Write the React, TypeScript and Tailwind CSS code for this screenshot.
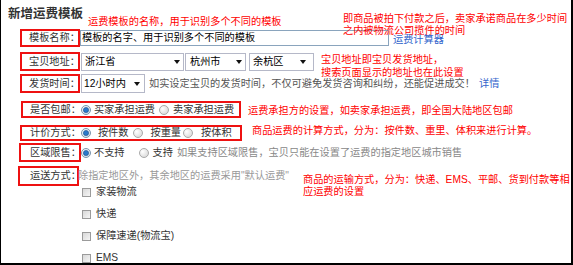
import React from 'react';

const Radio = ({ checked = false }: { checked?: boolean }) => (
  <svg width="10" height="10" viewBox="0 0 10 10" className="shrink-0">
    <defs>
      <radialGradient id={checked ? 'rOn' : 'rOff'} cx="0.35" cy="0.35" r="0.8">
        <stop offset="0" stopColor="#ffffff" />
        <stop offset="1" stopColor={checked ? '#c9d6e2' : '#d4d4d4'} />
      </radialGradient>
    </defs>
    <circle cx="5" cy="5" r="4.5" fill={`url(#${checked ? 'rOn' : 'rOff'})`} stroke={checked ? '#7a95ad' : '#a9a9a9'} />
    {checked && <circle cx="5" cy="5" r="2.6" fill="#2b78c9" stroke="#1a4f8a" strokeWidth="0.6" />}
  </svg>
);

const Check = () => (
  <span className="block h-[9px] w-[9px] shrink-0 border border-[#9b9b9b] bg-gradient-to-br from-[#d8d8d8] to-[#f6f6f6]" />
);

const Arrow = () => (
  <svg width="6" height="4" viewBox="0 0 6 4" className="shrink-0">
    <path d="M0 0h6L3 4z" fill="#111" />
  </svg>
);

const Label = ({ children }: { children: React.ReactNode }) => (
  <span className="whitespace-nowrap text-[#333]">{children}</span>
);

const RedText = ({ children, className }: { children: React.ReactNode; className: string }) => (
  <div className={`absolute whitespace-nowrap text-[10.2px] text-[#ff0000] ${className}`}>{children}</div>
);

export default function App() {
  return (
    <div className="relative h-[265px] w-[573px] overflow-hidden border-b-2 border-l border-r-2 border-black bg-white font-['Liberation_Sans','Noto_Sans_CJK_SC',sans-serif] text-[10.2px] leading-[12px]">
      <div className="ml-[7px] mt-[6px] h-[16px] text-[12.5px] font-bold leading-[16px] text-[#333]">新增运费模板</div>

      {/* 模板名称 */}
      <div className="mt-[7px] flex h-[18px] items-center">
        <div className="ml-[19px] flex h-[18px] w-[60px] items-center border-2 border-[#ee1111] pl-[7px]">
          <Label>模板名称：</Label>
        </div>
        <div className="flex h-[16px] w-[309px] items-center border border-[#8aa4bd] pl-[1px] text-black">
          模板的名字、用于识别多个不同的模板
        </div>
        <span className="ml-[4px] mt-[3px] text-[#3366cc]">运费计算器</span>
      </div>

      {/* 宝贝地址 */}
      <div className="mt-[5px] flex h-[19px] items-center">
        <div className="ml-[19px] flex h-[19px] w-[60px] items-center border-2 border-[#ee1111] pl-[7px]">
          <Label>宝贝地址：</Label>
        </div>
        <div className="ml-[1px] flex h-[18px] w-[103px] items-center justify-between border border-[#b5b8c8] pl-[3px] pr-[3px] text-black">
          <span>浙江省</span>
          <Arrow />
        </div>
        <div className="ml-[1px] flex h-[18px] w-[61px] items-center justify-between border border-[#b5b8c8] pl-[4px] pr-[3px] text-black">
          <span>杭州市</span>
          <Arrow />
        </div>
        <div className="ml-[3px] flex h-[18px] w-[65px] items-center justify-between border border-[#b5b8c8] pl-[3px] pr-[7px] text-black">
          <span>余杭区</span>
          <Arrow />
        </div>
      </div>

      {/* 发货时间 */}
      <div className="mt-[3px] flex h-[19px] items-center">
        <div className="ml-[19px] flex h-[19px] w-[60px] items-center border-2 border-[#ee1111] pl-[7px]">
          <Label>发货时间：</Label>
        </div>
        <div className="ml-[1px] flex h-[19px] w-[64px] items-center justify-between border border-[#b5b8c8] pl-[2px] pr-[4px] text-black">
          <span>12小时内</span>
          <Arrow />
        </div>
        <span className="ml-[4px] whitespace-nowrap text-[#555]">如实设定宝贝的发货时间，不仅可避免发货咨询和纠纷，还能促进成交！</span>
        <span className="ml-[4px] text-[#3366cc]">详情</span>
      </div>

      {/* 是否包邮 */}
      <div className="ml-[20px] mt-[8px] flex h-[17px] w-[220px] items-center border-2 border-[#ee1111] pl-[7px]">
        <Label>是否包邮：</Label>
        <Radio checked />
        <span className="ml-[3px] text-[#333]">买家承担运费</span>
        <span className="ml-[4px]">
          <Radio />
        </span>
        <span className="ml-[4px] text-[#333]">卖家承担运费</span>
      </div>

      {/* 计价方式 */}
      <div className="ml-[19px] mt-[7px] flex h-[16px] w-[222px] items-center border-2 border-[#ee1111] pl-[8px]">
        <Label>计价方式：</Label>
        <Radio checked />
        <span className="ml-[7px] text-[#333]">按件数</span>
        <span className="ml-[4px]">
          <Radio />
        </span>
        <span className="ml-[8px] text-[#333]">按重量</span>
        <span className="ml-[2px]">
          <Radio />
        </span>
        <span className="ml-[8px] text-[#333]">按体积</span>
      </div>

      {/* 区域限售 */}
      <div className="mt-[2px] flex h-[19px] items-center">
        <div className="ml-[18px] flex h-[19px] w-[62px] items-center border-2 border-[#ee1111] pl-[9px]">
          <Label>区域限售：</Label>
        </div>
        <Radio checked />
        <span className="ml-[3px] text-[#333]">不支持</span>
        <span className="ml-[14px]">
          <Radio />
        </span>
        <span className="ml-[4px] text-[#333]">支持</span>
        <span className="ml-[4px] whitespace-nowrap text-[#888]">如果支持区域限售，宝贝只能在设置了运费的指定地区城市销售</span>
      </div>

      {/* 运送方式 */}
      <div className="mt-[4px] flex h-[20px] items-center">
        <div className="ml-[17px] flex h-[20px] w-[61px] items-center border-2 border-[#ee1111] pl-[10px]">
          <Label>运送方式：</Label>
        </div>
        <span className="ml-[-1px] whitespace-nowrap text-[#999]">除指定地区外，其余地区的运费采用"默认运费"</span>
      </div>
      <div className="ml-[81px] flex flex-col gap-[10px]">
        {['家装物流', '快递', '保障速递(物流宝)', 'EMS'].map((name) => (
          <div key={name} className="flex h-[12px] items-center">
            <Check />
            <span className="ml-[5px] text-[#333]">{name}</span>
          </div>
        ))}
      </div>

      {/* annotations */}
      <RedText className="left-[87px] top-[16px]">运费模板的名称，用于识别多个不同的模板</RedText>
      <RedText className="left-[342px] top-[13px]">
        即商品被拍下付款之后，卖家承诺商品在多少时间
        <br />
        之内被物流公司揽件的时间
      </RedText>
      <RedText className="left-[320px] top-[53px] leading-[13px]">
        宝贝地址即宝贝发货地址，
        <br />
        搜索页面显示的地址也在此设置
      </RedText>
      <RedText className="left-[247px] top-[105px]">运费承担方的设置，如卖家承担运费，即全国大陆地区包邮</RedText>
      <RedText className="left-[251px] top-[125px]">商品运费的计算方式，分为：按件数、重里、体积来进行计算。</RedText>
      <RedText className="left-[302px] top-[174px]">
        商品的运输方式，分为：快递、EMS、平邮、货到付款等相
        <br />
        应运费的设置
      </RedText>
    </div>
  );
}
